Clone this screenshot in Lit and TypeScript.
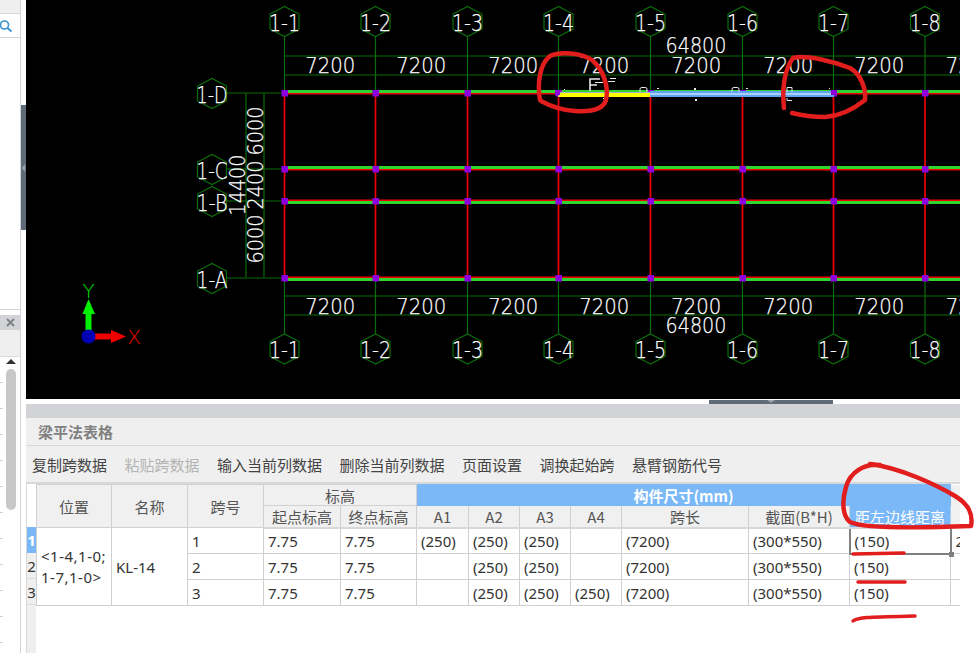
import { LitElement, html, css, svg } from 'lit';
import { customElement } from 'lit/decorators.js';

const AXES_X = [284.5, 375.5, 467.5, 558.5, 650.5, 742.5, 833.5, 925];
// flip: the red centre line sits above the green beam instead of below it
const AXES_Y = [
  { name: '1-D', y: 93, flip: false },
  { name: '1-C', y: 169, flip: false },
  { name: '1-B', y: 201, flip: true },
  { name: '1-A', y: 278, flip: true },
];
const GREEN = '#0a6e0a';

function hexagon(cx: number, cy: number) {
  const pts = [];
  for (let i = 0; i < 6; i++) {
    const a = (Math.PI / 3) * i + Math.PI / 6;
    pts.push(`${cx + (14.5 * Math.cos(a)) / Math.cos(Math.PI / 6)},${cy + 15 * Math.sin(a)}`);
  }
  return svg`<polygon points=${pts.join(' ')} fill="none" stroke=${GREEN} stroke-width="1.2" />`;
}

function bubble(cx: number, cy: number, label: string) {
  return svg`
    ${hexagon(cx, cy)}
    <text x=${cx} y=${cy + 9} text-anchor="middle" class="cad" font-size="23" textLength="31" lengthAdjust="spacingAndGlyphs">${label}</text>
  `;
}

function dim(x: number, y: number, label: string) {
  const w = label.length === 4 ? 50 : 61;
  return svg`<text x=${x} y=${y} text-anchor="middle" class="cad" font-size="22" textLength=${w} lengthAdjust="spacingAndGlyphs">${label}</text>`;
}

function vdim(x: number, y: number, label: string) {
  const w = label.length === 4 ? 49 : 61;
  return svg`<text transform="translate(${x} ${y}) rotate(-90)" text-anchor="middle" class="cad" font-size="22" textLength=${w} lengthAdjust="spacingAndGlyphs">${label}</text>`;
}

@customElement('cad-view')
class CadView extends LitElement {
  static styles = css`
    :host {
      display: block;
      height: 399px;
      background: #000;
      overflow: hidden;
    }
    svg {
      display: block;
    }
    .cad {
      fill: #fff;
      stroke: #fff;
      stroke-width: 0.25px;
      font-family: 'DejaVu Sans', sans-serif;
      font-weight: 200;
    }
    .axis-name {
      font-family: 'DejaVu Sans', sans-serif;
      font-weight: 200;
      font-size: 20px;
    }
  `;

  // the drawing is in page coordinates minus the 26px sidebar
  render() {
    return html`
      <svg width="934" height="399" viewBox="26 0 934 399">
        ${AXES_X.map(
          (x, i) => svg`
            <line x1=${x} y1="36" x2=${x} y2="93" stroke=${GREEN} stroke-width="1.2" />
            <line x1=${x} y1="277" x2=${x} y2="334" stroke=${GREEN} stroke-width="1.2" />
            ${bubble(x, 21.5, `1-${i + 1}`)}
            ${bubble(x, 349, `1-${i + 1}`)}
          `
        )}
        <g stroke=${GREEN} stroke-width="1.2">
          <line x1="284" y1="56" x2="960" y2="56" />
          <line x1="284" y1="75" x2="960" y2="75" />
          <line x1="284" y1="296" x2="960" y2="296" />
          <line x1="284" y1="315" x2="960" y2="315" />
          <line x1="246" y1="93" x2="246" y2="277" />
          <line x1="264" y1="93" x2="264" y2="277" />
        </g>
        ${AXES_Y.map(
          (a) => svg`
            <line x1="226" y1=${a.y} x2="284" y2=${a.y} stroke=${GREEN} stroke-width="1.2" />
            <rect x="285" y=${a.flip ? a.y : a.y - 3} width="675" height="3" fill="#2fd42f" />
            <rect x="285" y=${a.flip ? a.y - 1.5 : a.y} width="675" height="1.500" fill="#f00000" />
            ${bubble(212, a.y + 0.5, a.name)}
          `
        )}
        ${AXES_X.map(
          (x) => svg`<line x1=${x} y1="93" x2=${x} y2="277" stroke="#f00000" stroke-width="1.700" />`
        )}
        ${AXES_Y.map((a) =>
          AXES_X.map((x) => svg`<rect x=${x - 3} y=${a.y - 3} width="6.500" height="6.500" fill="#8c00e0" />`)
        )}
        ${AXES_X.map(
          (x) => svg`
            ${dim(x + 45.7, 73, '7200')}
            ${dim(x + 45.7, 314, '7200')}
          `
        )}
        ${dim(696, 53, '64800')}
        ${dim(696, 333, '64800')}

        ${vdim(263, 131, '6000')}
        ${vdim(263, 185, '2400')}
        ${vdim(263, 239, '6000')}
        ${vdim(245, 185, '14400')}

        <rect x="650" y="91" width="184" height="6" fill="#5ea4f0" />
        <rect x="650" y="93" width="184" height="2" fill="#a8d0f8" />
        <rect x="558" y="92" width="92" height="5" fill="#9fb4c8" />
        <rect x="559" y="93" width="91" height="4" fill="#ffff00" />
        <rect x="555" y="90" width="5" height="5" fill="#8c00e0" />
        <rect x="831" y="90" width="5" height="5" fill="#8c00e0" />
        <g fill="none" stroke="#e8e8e8">
          <path d="M590 91V79H600M590 85H597" stroke-width="1.600" />
          <path d="M640 92V89Q640 87.500 642 87.500H645Q647 87.500 647 89V92" />
          <path d="M732 92V89Q732 87.500 734 87.500H737Q739 87.500 739 89V92" />
          <path d="M787 92V87.500H792V92M787 98V100.500H792" />
        </g>
        <g fill="#e8e8e8">
          <rect x="595" y="82" width="8" height="1" />
          <rect x="604" y="79" width="3" height="1" />
          <rect x="610" y="78" width="6" height="1" />
          <rect x="608" y="81" width="7" height="1" />
          <rect x="564" y="89" width="1" height="1" />
          <rect x="603" y="98" width="2" height="1" />
          <rect x="657" y="88" width="2" height="1" />
          <rect x="694" y="88" width="2" height="2" />
          <rect x="695" y="99" width="2" height="2" />
          <rect x="746" y="88" width="2" height="1" />
          <rect x="829" y="88" width="1" height="1" />
        </g>

        <line x1="88" y1="336.500" x2="112" y2="336.500" stroke="#f00000" stroke-width="6" />
        <polygon points="111,330 126,336.500 111,343" fill="#f00000" />
        <line x1="88.500" y1="336" x2="88.500" y2="312" stroke="#00f000" stroke-width="6" />
        <polygon points="82.500,314 88.500,299 95,314" fill="#00f000" />
        <circle cx="88.500" cy="336.500" r="7" fill="#0000b4" />
        <text x="134" y="344" text-anchor="middle" fill="#f00000" class="axis-name">X</text>
        <text x="88.500" y="298" text-anchor="middle" fill="#00e000" class="axis-name">Y</text>
      </svg>
    `;
  }
}

interface Row {
  no: number;
  a1: string;
  a4: string;
  selected?: boolean;
}

const ROWS: Row[] = [
  { no: 1, a1: '(250)', a4: '', selected: true },
  { no: 2, a1: '', a4: '' },
  { no: 3, a1: '', a4: '(250)' },
];

@customElement('beam-table')
class BeamTable extends LitElement {
  static styles = css`
    :host {
      display: flex;
      flex: 1;
      font-family: 'Noto Sans CJK SC', 'Noto Sans', sans-serif;
      font-size: 15px;
      color: #333;
      background: #fff;
    }
    .gutter {
      width: 10px;
      box-sizing: border-box;
      border-left: 1px solid #d8d8d8;
      background: #efefef;
      display: flex;
      flex-direction: column;
      flex: none;
    }
    .corner {
      height: 43px;
      background: #fff;
    }
    .gutter .num {
      height: 26px;
      line-height: 26px;
      box-sizing: border-box;
      border-bottom: 1px solid #dcdcdc;
      text-align: center;
      font-family: 'Noto Sans', sans-serif;
      font-size: 15px;
      overflow: hidden;
    }
    .gutter .on {
      background: #7ab8f7;
      color: #fff;
      font-weight: 700;
      border-bottom: none;
    }
    table {
      border-collapse: collapse;
      table-layout: fixed;
      width: 924px;
      align-self: flex-start;
    }
    th,
    td {
      border: 1px solid #d0d0d0;
      padding: 0;
      overflow: hidden;
      white-space: nowrap;
      box-sizing: border-box;
    }
    th {
      background: #f0f0f0;
      font-weight: 400;
      text-align: center;
      line-height: 19px;
      color: #555;
    }
    tr.top th {
      height: 21px;
    }
    tr.sub th {
      height: 22px;
      border-bottom: 2px solid #d8d8d8;
    }
    td {
      height: 26px;
      padding-left: 4px;
      font-family: 'Noto Sans', sans-serif;
      font-size: 15px;
    }
    th.blue {
      background: #7ab8f7;
      color: #fff;
      font-weight: 700;
      border-color: #7ab8f7;
    }
    th.current {
      background: #7ab8f7;
      color: #fff;
      border: 1px solid #a8d2fa;
    }
    tr.sub th.current {
      border-bottom: 2px solid #d8d8d8;
    }
    th.edge {
      border: none;
      background: #f0f0f0;
    }
    td.pos {
      white-space: normal;
      line-height: 21px;
      letter-spacing: 0.5px;
    }
    td.active {
      position: relative;
      overflow: visible;
      border-left: 2px solid #808080;
      border-right: 2px solid #808080;
      border-bottom: 2px solid #808080;
    }
    .handle {
      position: absolute;
      right: -4px;
      bottom: -4px;
      width: 5px;
      height: 5px;
      background: #808080;
    }
    td.last {
      border-right: none;
    }
  `;

  render() {
    return html`
      <div class="gutter">
        <div class="corner"></div>
        ${ROWS.map((r) => html`<div class="num ${r.selected ? 'on' : ''}">${r.no}</div>`)}
      </div>
      <table>
        <colgroup>
          ${[75, 76, 76, 77, 76, 52, 51, 51, 51, 127, 101, 101, 10].map(
            (w) => html`<col style="width:${w}px" />`
          )}
        </colgroup>
        <thead>
          <tr class="top">
            <th rowspan="2">位置</th>
            <th rowspan="2">名称</th>
            <th rowspan="2">跨号</th>
            <th colspan="2">标高</th>
            <th colspan="7" class="blue">构件尺寸(mm)</th>
            <th rowspan="2" class="edge"></th>
          </tr>
          <tr class="sub">
            <th>起点标高</th>
            <th>终点标高</th>
            <th>A1</th>
            <th>A2</th>
            <th>A3</th>
            <th>A4</th>
            <th>跨长</th>
            <th>截面(B*H)</th>
            <th class="current">距左边线距离</th>
          </tr>
        </thead>
        <tbody>
          ${ROWS.map(
            (r, i) => html`
              <tr>
                ${i === 0
                  ? html`
                      <td rowspan="3" class="pos">&lt;1-4,1-0;<br />1-7,1-0&gt;</td>
                      <td rowspan="3">KL-14</td>
                    `
                  : ''}
                <td>${r.no}</td>
                <td>7.75</td>
                <td>7.75</td>
                <td>${r.a1}</td>
                <td>(250)</td>
                <td>(250)</td>
                <td>${r.a4}</td>
                <td>(7200)</td>
                <td>(300*550)</td>
                <td class=${r.selected ? 'active' : ''}>
                  (150)${r.selected ? html`<span class="handle"></span>` : ''}
                </td>
                <td class="last">${r.selected ? '2' : ''}</td>
              </tr>
            `
          )}
        </tbody>
      </table>
    `;
  }
}

@customElement('app-root')
export class AppRoot extends LitElement {
  static styles = css`
    :host {
      display: block;
      position: relative;
      width: 976px;
      height: 653px;
      overflow: hidden;
      background: #fff;
      font-family: 'Noto Sans CJK SC', 'Noto Sans', sans-serif;
    }
    .shell {
      display: flex;
      width: 960px;
      height: 653px;
    }
    .side {
      width: 21px;
      flex: none;
      display: flex;
      flex-direction: column;
      border-right: 1px solid #d0d4d8;
      box-sizing: border-box;
    }
    .side-top {
      height: 14px;
      background: #efefef;
      border-bottom: 1px solid #d8d8d8;
      box-sizing: border-box;
    }
    .search {
      height: 24px;
      border-bottom: 1px solid #d0d4d8;
      display: flex;
      align-items: center;
      box-sizing: border-box;
    }
    .side-tree {
      height: 272px;
      border-bottom: 1px solid #d0d4d8;
      box-sizing: border-box;
    }
    .side-gap {
      height: 5px;
    }
    .side-head {
      height: 15px;
      flex: none;
      background: #d2d3d7;
      display: flex;
      justify-content: flex-end;
      align-items: center;
      padding-right: 5px;
    }
    .side-tools {
      height: 27px;
      flex: none;
      background: #efefef;
      border-bottom: 1px solid #ddd;
      box-sizing: border-box;
    }
    .side-list {
      flex: 1;
      display: flex;
      flex-direction: column;
      align-items: flex-end;
      padding-right: 4px;
      min-height: 0;
      background: repeating-linear-gradient(#0000 0 25px, #d0d0d0 25px 26px) 0 0 / 3px 100% no-repeat;
    }
    .sb-up {
      width: 0;
      height: 0;
      margin: 2px 0 5px;
      border-left: 5px solid transparent;
      border-right: 5px solid transparent;
      border-bottom: 5px solid #333;
    }
    .sb {
      width: 10px;
      height: 141px;
      border-radius: 5px;
      background: #c8c8c8;
    }
    .split-v {
      width: 5px;
      flex: none;
    }
    .split-v i {
      display: flex;
      align-items: center;
      height: 125px;
      margin-top: 105px;
      background: #5f6b78;
    }
    .split-v b {
      width: 0;
      height: 0;
      margin-left: 1px;
      border-top: 4px solid transparent;
      border-bottom: 4px solid transparent;
      border-right: 3px solid #9aa3ac;
    }
    .main {
      width: 934px;
      flex: none;
      display: flex;
      flex-direction: column;
      overflow: hidden;
    }
    .split-h {
      height: 5px;
      flex: none;
      display: flex;
      justify-content: flex-end;
      padding: 1px 127px 0 0;
      box-sizing: border-box;
      background: #fff;
    }
    .split-h i {
      display: flex;
      justify-content: center;
      width: 124px;
      background: #5f6b78;
    }
    .split-h b {
      width: 0;
      height: 0;
      border-left: 4px solid transparent;
      border-right: 4px solid transparent;
      border-top: 3px solid #9aa3ac;
    }
    .panel-head {
      height: 14px;
      flex: none;
      background: #d2d3d7;
    }
    .panel-title {
      height: 28px;
      flex: none;
      box-sizing: border-box;
      background: #efefef;
      border-bottom: 1px solid #d8d8d8;
      padding-left: 12px;
      line-height: 27px;
      font-size: 15px;
      font-weight: 700;
      color: #808080;
    }
    .toolbar {
      height: 38px;
      flex: none;
      box-sizing: border-box;
      background: #efefef;
      border-bottom: 2px solid #d8d8d8;
      display: flex;
      gap: 17.5px;
      align-items: center;
      padding-left: 6px;
      font-size: 15px;
      color: #444;
    }
    .toolbar .off {
      color: #b4b4b4;
    }
    .ink {
      position: absolute;
      left: 0;
      top: 0;
      pointer-events: none;
    }
  `;

  render() {
    return html`
      <div class="shell">
        <aside class="side">
          <div class="side-top"></div>
          <div class="search">
            <svg width="14" height="14" viewBox="0 0 14 14" fill="none" stroke="#3c93cf" stroke-width="1.6">
              <circle cx="4.500" cy="6" r="4" />
              <path d="M7.500 9l4 3.500" stroke-width="2" />
            </svg>
          </div>
          <div class="side-tree"></div>
          <div class="side-gap"></div>
          <div class="side-head">
            <svg width="9" height="9" viewBox="0 0 9 9" stroke="#808488" stroke-width="2">
              <path d="M1 1l7 7M8 1l-7 7" />
            </svg>
          </div>
          <div class="side-tools"></div>
          <div class="side-list">
            <div class="sb-up"></div>
            <div class="sb"></div>
          </div>
        </aside>
        <div class="split-v"><i><b></b></i></div>
        <div class="main">
          <cad-view></cad-view>
          <div class="split-h"><i><b></b></i></div>
          <div class="panel-head"></div>
          <div class="panel-title">梁平法表格</div>
          <div class="toolbar">
            <span>复制跨数据</span>
            <span class="off">粘贴跨数据</span>
            <span>输入当前列数据</span>
            <span>删除当前列数据</span>
            <span>页面设置</span>
            <span>调换起始跨</span>
            <span>悬臂钢筋代号</span>
          </div>
          <beam-table></beam-table>
        </div>
      </div>
      <svg class="ink" width="976" height="653" fill="none" stroke="#e21d1d" stroke-linecap="round" stroke-linejoin="round">
        <path stroke-width="4.500" d="M540 100C537 82 540 64 550 56C560 51 582 53 592 60C604 70 609 88 606 100C603 110 590 112 575 111C560 110 550 106 541 101" />
        <path stroke-width="4.500" d="M784 108C782 90 784 70 793 58C805 54 835 62 850 68C862 75 866 90 865 100C855 108 840 116 825 117C812 117 800 115 792 113" />
        <path stroke-width="4.500" d="M880 465C865 463 850 472 846 487C842 500 842 516 850 522C865 529 920 528 971 526C973 515 970 505 955 496C935 484 900 468 870 464" />
        <path stroke-width="3.500" d="M853 554L904 553" />
        <path stroke-width="3.500" d="M858 582L905 582" />
        <path stroke-width="3.500" d="M853 621C858 617 870 617 915 616" />
      </svg>
    `;
  }
}
